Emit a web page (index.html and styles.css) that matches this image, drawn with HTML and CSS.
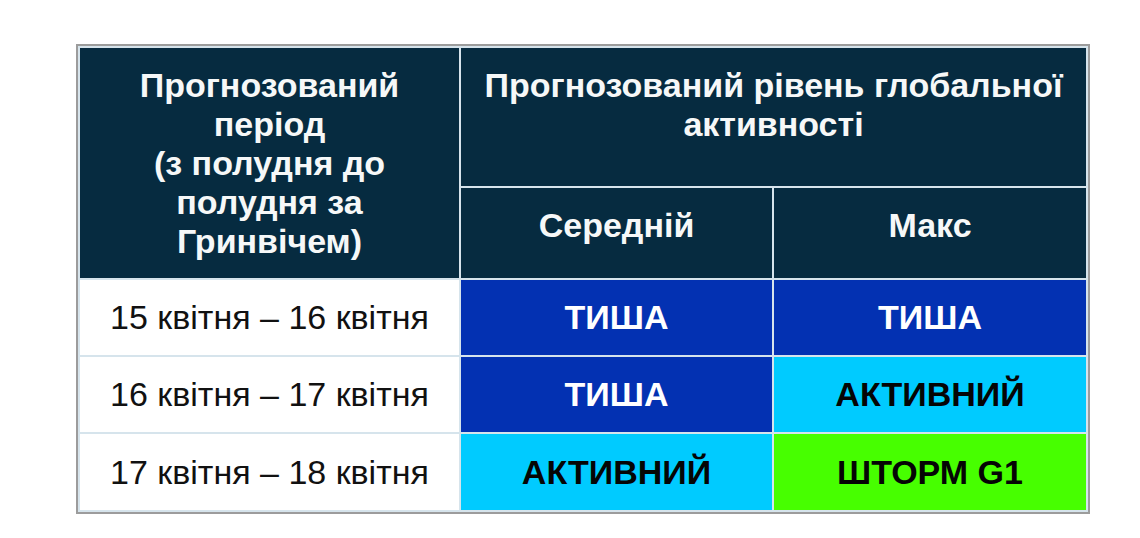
FILE: index.html
```html
<!DOCTYPE html>
<html lang="uk">
<head>
<meta charset="utf-8">
<title>Прогноз геомагнітної активності</title>
<link rel="stylesheet" href="styles.css">
</head>
<body>
<main class="page">
  <table class="forecast">
    <colgroup>
      <col class="col-period">
      <col class="col-avg">
      <col class="col-max">
    </colgroup>
    <thead>
      <tr class="head-top">
        <th rowspan="2">Прогнозований період<br>(з полудня до полудня за Гринвічем)</th>
        <th colspan="2">Прогнозований рівень глобальної активності</th>
      </tr>
      <tr class="head-sub">
        <th>Середній</th>
        <th>Макс</th>
      </tr>
    </thead>
    <tbody>
      <tr>
        <td class="period">15 квітня – 16 квітня</td>
        <td class="level quiet">ТИША</td>
        <td class="level quiet">ТИША</td>
      </tr>
      <tr>
        <td class="period">16 квітня – 17 квітня</td>
        <td class="level quiet">ТИША</td>
        <td class="level active">АКТИВНИЙ</td>
      </tr>
      <tr>
        <td class="period">17 квітня – 18 квітня</td>
        <td class="level active">АКТИВНИЙ</td>
        <td class="level storm">ШТОРМ G1</td>
      </tr>
    </tbody>
  </table>
</main>
</body>
</html>
```
FILE: styles.css
```css
html, body {
  margin: 0;
  background: #ffffff;
}

.page {
  padding: 44px 0 0 76px;
  font-family: "Liberation Sans", Arial, sans-serif;
}

.forecast {
  border-collapse: separate;
  border-spacing: 2px;
  border: 2px solid #9c9c9c;
  background: #d6e4ec;
  table-layout: fixed;
  width: 1014px;
  font-size: 34px;
  line-height: 39px;
}

.col-period { width: 379px; }
.col-avg { width: 311px; }
.col-max { width: 312px; }

.forecast th {
  background: #062b40;
  color: #f6f8f8;
  font-weight: bold;
  text-align: center;
  vertical-align: top;
  padding: 18px 12px 0;
}

.head-top th {
  height: 120px;
}

.head-top th[rowspan] {
  padding-left: 40px;
  padding-right: 40px;
}

.head-sub th {
  height: 72px;
}

.forecast td {
  height: 75px;
  padding: 0;
  text-align: center;
  vertical-align: middle;
}

.forecast tbody tr:last-child td {
  height: 76px;
}

.period {
  background: #ffffff;
  color: #111111;
  font-weight: normal;
}

.level {
  font-weight: bold;
}

.quiet {
  background: #0331b2;
  color: #ffffff;
}

.active {
  background: #00cbff;
  color: #050505;
}

.storm {
  background: #47ff00;
  color: #050505;
}
```
